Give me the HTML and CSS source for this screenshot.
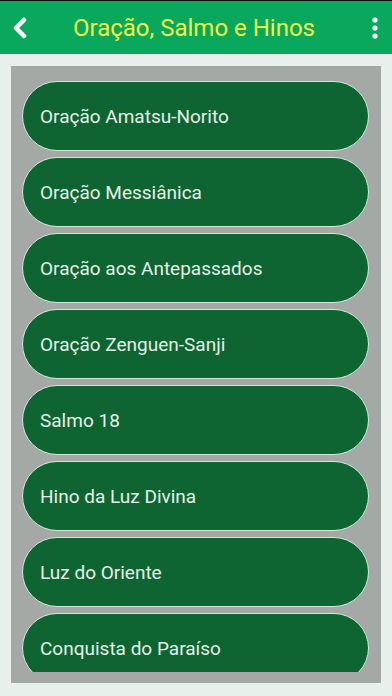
FILE: index.html
```html
<!DOCTYPE html>
<html lang="pt">
<head>
    <meta charset="UTF-8">
    <meta name="viewport" content="width=device-width, initial-scale=1.0">
    <title>Oração, Salmo e Hinos</title>
    <link rel="stylesheet" href="styles.css">
</head>
<body>
    <div class="topbar">
        <a class="back" href="#">
            <svg width="16" height="22" viewBox="0 0 16 22"><path d="M12 3 L4 11 L12 19" fill="none" stroke="#fff" stroke-width="4.5" stroke-linecap="round" stroke-linejoin="round"/></svg>
        </a>
        <h1>Oração, Salmo e Hinos</h1>
        <a class="menu" href="#">
            <svg width="8" height="22" viewBox="0 0 8 22"><circle cx="4" cy="3" r="2.6" fill="#fff"/><circle cx="4" cy="11" r="2.6" fill="#fff"/><circle cx="4" cy="19" r="2.6" fill="#fff"/></svg>
        </a>
    </div>

    <div class="panel">
        <div class="list">
            <a class="item" href="#">Oração Amatsu-Norito</a>
            <a class="item" href="#">Oração Messiânica</a>
            <a class="item" href="#">Oração aos Antepassados</a>
            <a class="item" href="#">Oração Zenguen-Sanji</a>
            <a class="item" href="#">Salmo 18</a>
            <a class="item" href="#">Hino da Luz Divina</a>
            <a class="item" href="#">Luz do Oriente</a>
            <a class="item" href="#">Conquista do Paraíso</a>
        </div>
    </div>
</body>
</html>
```

FILE: styles.css
```css
html, body {
    margin: 0;
    padding: 0;
}
body {
    width: 392px;
    height: 696px;
    overflow: hidden;
    background: #e8f0ec;
    font-family: Roboto, "Noto Sans", Arial, sans-serif;
}
.topbar {
    height: 54px;
    border-top: 1px solid #111;
    background: #0aa85c;
    display: flex;
    align-items: center;
    box-sizing: border-box;
}
.back {
    width: 44px;
    display: flex;
    justify-content: flex-end;
    padding-right: 0;
    box-sizing: border-box;
    padding-left: 12px;
    justify-content: flex-start;
}
.topbar h1 {
    flex: 1;
    margin: 0;
    text-align: center;
    color: #eef548;
    font-size: 24px;
    font-weight: 400;
    padding-right: 4px;
}
.menu {
    width: 44px;
    display: flex;
    justify-content: center;
    padding-left: 10px;
    box-sizing: border-box;
}
.panel {
    margin: 12px 11px 0;
    height: 617px;
    background: #a4a9a5;
    padding: 15px 12px 11px 11px;
    box-sizing: border-box;
}
.list {
    height: 100%;
    overflow: hidden;
    display: flex;
    flex-direction: column;
    gap: 6px;
}
.item {
    flex: none;
    height: 70px;
    box-sizing: border-box;
    border: 1.5px solid #cfeadb;
    border-radius: 35px;
    background: #0e6531;
    color: #e6f0e8;
    text-decoration: none;
    font-size: 19px;
    display: flex;
    align-items: center;
    padding-left: 17px;
}
```
